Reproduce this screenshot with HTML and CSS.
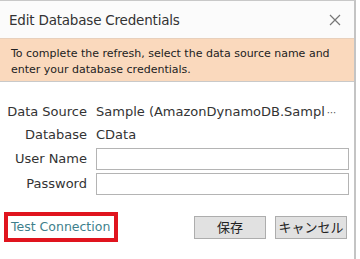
FILE: index.html
```html
<!doctype html>
<html>
  <head>
    <meta charset="utf-8">
    <link rel="stylesheet" href="styles.css">
  </head>
  <body>
    <div class="dialog">
      <div class="titlebar">
        <span class="title">Edit Database Credentials</span>
        <svg class="close" width="12" height="12" viewBox="0 0 12 12">
          <path d="M1 1L11 11M11 1L1 11" stroke="#777" stroke-width="1.2" fill="none"/>
        </svg>
      </div>
      <div class="notice">To complete the refresh, select the data source name and enter your database credentials.</div>

      <div class="form">
        <label>Data Source</label>
        <span class="value">Sample (AmazonDynamoDB.Sampl<span class="dots">&#8943;</span></span>
        <label>Database</label>
        <span class="value">CData</span>
        <label>User Name</label>
        <input type="text">
        <label>Password</label>
        <input type="password">
      </div>

      <div class="footer">
        <a class="test" href="#">Test Connection</a>
        <div class="buttons">
          <button>保存</button>
          <button>キャンセル</button>
        </div>
      </div>
    </div>
  </body>
</html>
```

FILE: styles.css
```css
body {
  margin: 0;
  background: #fff;
  font-family: "DejaVu Sans", "Noto Sans CJK JP", sans-serif;
  color: #333;
}

.dialog {
  width: 356px;
  height: 259px;
  box-sizing: border-box;
  border-top: 1px solid #c8c8c8;
  border-right: 2px solid #c4c4c4;
  background: #fff;
}

.titlebar {
  height: 37px;
  display: flex;
  align-items: center;
  justify-content: space-between;
  padding: 0 13px 0 9px;
  background: #fbfbfb;
}

.title {
  font-size: 13.5px;
  letter-spacing: -0.2px;
  color: #333;
}

.notice {
  background: #fad9bd;
  border-top: 1px solid #e8d0bc;
  border-bottom: 1px solid #c9c9c9;
  padding: 7px 10px 3px 11px;
  font-size: 11px;
  line-height: 16px;
  color: #222;
}

.form {
  display: grid;
  grid-template-columns: 87px 253px;
  column-gap: 9px;
  row-gap: 3px;
  align-items: center;
  padding: 20px 0 0 0;
  font-size: 13px;
}

.form label {
  text-align: right;
  height: 20px;
  line-height: 20px;
}

.form .value {
  height: 20px;
  line-height: 20px;
  white-space: nowrap;
  overflow: hidden;
}

.dots {
  font-size: 10px;
  margin-left: 2px;
  color: #555;
}

.form input {
  height: 22px;
  box-sizing: border-box;
  border: 1px solid #b4b4b4;
  margin: 0;
  padding: 0 4px;
}

.footer {
  display: flex;
  align-items: center;
  justify-content: space-between;
  padding: 17px 7px 0 4px;
}

.test {
  display: block;
  border: 4px solid #e0141e;
  padding: 3px 4px 4px 3px;
  font-size: 12.5px;
  color: #3e7f8c;
  text-decoration: none;
}

.buttons {
  display: flex;
  gap: 9px;
}

.buttons button {
  width: 72px;
  height: 23px;
  background: #e1e1e1;
  border: 1px solid #adadad;
  font-family: "Noto Sans CJK JP", sans-serif;
  font-size: 13px;
  line-height: 20px;
  color: #222;
  padding: 0;
}
```
